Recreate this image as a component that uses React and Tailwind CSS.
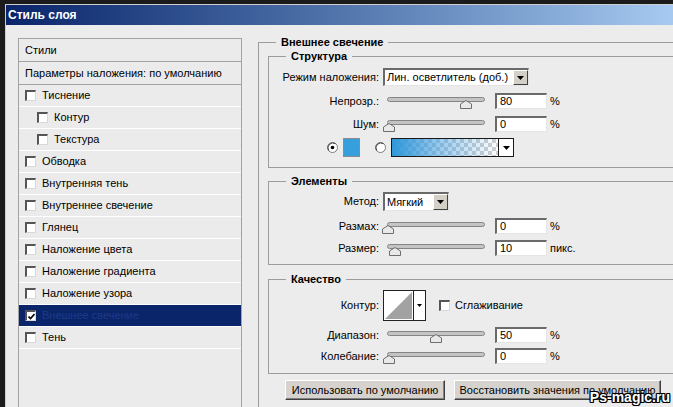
import React from 'react';

const layers = [
    { t: 'Тиснение' },
    { t: 'Контур', sub: true },
    { t: 'Текстура', sub: true },
    { t: 'Обводка' },
    { t: 'Внутренняя тень' },
    { t: 'Внутреннее свечение' },
    { t: 'Глянец' },
    { t: 'Наложение цвета' },
    { t: 'Наложение градиента' },
    { t: 'Наложение узора' },
    { t: 'Внешнее свечение', on: true, sel: true },
    { t: 'Тень' },
];

const Check = ({ on, className = '' }) => (
    <span className={`w-[11px] h-[11px] shrink-0 bg-white border-t-2 border-l-2 border-r border-b border-t-[#555] border-l-[#555] border-r-[#d8d8d8] border-b-[#d8d8d8] flex items-center justify-center ${className}`}>
        {on && (
            <svg width="7" height="7" viewBox="0 0 7 7">
                <path d="M0.5 3.5 L2.5 5.5 L6.5 1" stroke="#000" strokeWidth="1.6" fill="none" />
            </svg>
        )}
    </span>
);

const Radio = ({ on }) => (
    <svg width="11" height="11" viewBox="0 0 11 11" className="shrink-0">
        <circle cx="5.5" cy="5.5" r="5" fill="#fff" stroke="#7a7a7a" />
        <path d="M1.6 8.4 A5 5 0 0 1 8.4 1.6" stroke="#404040" fill="none" />
        {on && <circle cx="5.5" cy="5.5" r="1.8" fill="#000" />}
    </svg>
);

const Arrow = () => (
    <svg width="7" height="4" viewBox="0 0 7 4">
        <path d="M0 0 H7 L3.5 4 Z" fill="#000" />
    </svg>
);

const DropBtn = () => (
    <span className="w-[15px] h-full shrink-0 bg-[#d4d0c8] border border-t-white border-l-white border-r-[#404040] border-b-[#404040] flex items-center justify-center">
        <Arrow />
    </span>
);

const Select = ({ value, w }) => (
    <div className={`${w} h-full ml-[4px] bg-white border-t-2 border-l-2 border-r border-b border-t-[#6a6a6a] border-l-[#6a6a6a] border-r-[#e4e4e4] border-b-[#e4e4e4] flex items-center`}>
        <span className="flex-1 pl-[2px] truncate">{value}</span>
        <DropBtn />
    </div>
);

const Thumb = ({ left }) => (
    <svg width="12" height="9" viewBox="0 0 12 9" className="absolute top-[7px]" style={{ left }}>
        <path d="M0.5 4 L6 0.5 L11.5 4 V8.5 H0.5 Z" fill="#e9e9e9" stroke="#6e6e6e" />
    </svg>
);

const Slider = ({ pos }) => (
    <div className="relative w-[108px] h-full ml-[4px]">
        <div className="ml-[4px] mt-[4px] w-[98px] h-[5px] rounded-full bg-[#c4c4c4] border border-[#858585]" />
        <Thumb left={pos} />
    </div>
);

const NumInput = ({ value }) => (
    <div className="w-[52px] h-full ml-[4px] bg-white border-t-2 border-l-2 border-r border-b border-t-[#6a6a6a] border-l-[#6a6a6a] border-r-[#e4e4e4] border-b-[#e4e4e4] flex items-center pl-[3px]">
        {value}
    </div>
);

const Label = ({ children }) => (
    <span className="w-[110px] shrink-0 text-right">{children}</span>
);

const SliderRow = ({ label, pos, value, unit, className }) => (
    <div className={`flex items-center h-[16px] ${className}`}>
        <Label>{label}</Label>
        <Slider pos={pos} />
        <NumInput value={value} />
        <span className="ml-[3px]">{unit}</span>
    </div>
);

const Group = ({ title, className = '', children }) => (
    <fieldset className={`min-w-0 border border-[#9c9c9c] ${className}`}>
        <legend className="ml-[17px] px-[5px] font-bold leading-[14px]">{title}</legend>
        {children}
    </fieldset>
);

const WinButton = ({ children, w }) => (
    <button className={`${w} h-[20px] bg-[#d6d3ce] border border-t-white border-l-white border-r-[#404040] border-b-[#404040] shadow-[inset_-1px_-1px_0_#808080] text-center`}>
        {children}
    </button>
);

export default function App() {
    return (
        <div className="relative w-[673px] h-[407px] overflow-hidden bg-[#1b1b1b] pt-[4px] pl-[5px] font-['Liberation_Sans',Arial,sans-serif] text-[11px] text-black">
            <div className="h-full border-l border-t border-[#cfcfcf] flex flex-col">
                <div className="h-[20px] shrink-0 bg-linear-to-r from-[#0a246a] to-[#a6caf0] flex items-center pl-[2px] text-white font-bold text-[12px]">
                    Стиль слоя
                </div>

                <div className="flex-1 flex bg-[#ececec] overflow-hidden">
                    {/* styles list */}
                    <div className="pl-[12px] pt-[13px] shrink-0">
                        <div className="w-[224px] h-[420px] border border-[#a3a3a3] bg-[#ebebeb]">
                            <div className="h-[23px] border-b border-[#a3a3a3] flex items-center pl-[6px]">Стили</div>
                            <div className="h-[23px] border-b border-[#a3a3a3] flex items-center pl-[6px]">Параметры наложения: по умолчанию</div>
                            {layers.map((l) => (
                                <div
                                    key={l.t}
                                    className={`h-[22px] border-b border-white flex items-center ${l.sub ? 'pl-[18px]' : 'pl-[6px]'} ${l.sel ? 'bg-[#0a2569] text-[#1d3a8a]' : ''}`}
                                >
                                    <Check on={l.on} />
                                    <span className="ml-[6px]">{l.t}</span>
                                </div>
                            ))}
                        </div>
                    </div>

                    {/* settings */}
                    <div className="ml-[16px] pt-[10px] flex-1 min-w-0">
                        <Group title="Внешнее свечение" className="w-[440px] border-r-0 pb-[30px]">
                            <Group title="Структура" className="ml-[9px] w-[430px] pb-[10px]">
                                <div className="flex items-center h-[18px] mt-[5px]">
                                    <Label>Режим наложения:</Label>
                                    <Select value="Лин. осветлитель (доб.)" w="w-[146px]" />
                                </div>
                                <SliderRow label="Непрозр.:" pos={77} value="80" unit="%" className="mt-[7px]" />
                                <SliderRow label="Шум:" pos={0} value="0" unit="%" className="mt-[7px]" />
                                <div className="flex items-center h-[19px] mt-[6px] pl-[58px]">
                                    <Radio on />
                                    <span className="ml-[5px] w-[17px] h-[19px] bg-[#369fdc] border border-[#8a8a8a]" />
                                    <span className="ml-[15px]"><Radio /></span>
                                    <div className="ml-[5px] w-[123px] h-[19px] border border-[#1a1a1a] flex">
                                        <div className="flex-1 bg-[image:linear-gradient(to_right,#2f97d9,rgba(70,160,225,0.55)_45%,rgba(90,170,230,0)),repeating-conic-gradient(#cfcfcf_0_25%,#ffffff_0_50%)] [background-size:100%_100%,8px_8px]" />
                                        <span className="w-[15px] border-l border-[#1a1a1a] bg-white flex items-center justify-center">
                                            <Arrow />
                                        </span>
                                    </div>
                                </div>
                            </Group>

                            <Group title="Элементы" className="ml-[9px] mt-[6px] w-[430px] pb-[8px]">
                                <div className="flex items-center h-[19px] mt-[4px]">
                                    <Label>Метод:</Label>
                                    <Select value="Мягкий" w="w-[66px]" />
                                </div>
                                <SliderRow label="Размах:" pos={-1} value="0" unit="%" className="mt-[7px]" />
                                <SliderRow label="Размер:" pos={6} value="10" unit="пикс." className="mt-[6px]" />
                            </Group>

                            <Group title="Качество" className="ml-[9px] mt-[7px] w-[430px] pb-[9px]">
                                <div className="flex items-center h-[31px] mt-[4px]">
                                    <Label>Контур:</Label>
                                    <div className="ml-[4px] w-[43px] h-[31px] bg-white border border-[#222] flex">
                                        <svg width="29" height="29" viewBox="0 0 29 29" className="shrink-0">
                                            <path d="M1 28 L28 1 V28 Z" fill="#a2a2a2" />
                                        </svg>
                                        <span className="flex-1 border-l border-[#222] flex items-center justify-center">
                                            <svg width="5" height="3" viewBox="0 0 5 3">
                                                <path d="M0 0 H5 L2.5 3 Z" fill="#000" />
                                            </svg>
                                        </span>
                                    </div>
                                    <Check className="ml-[13px]" />
                                    <span className="ml-[5px]">Сглаживание</span>
                                </div>
                                <SliderRow label="Диапазон:" pos={47} value="50" unit="%" className="mt-[6px]" />
                                <SliderRow label="Колебание:" pos={0} value="0" unit="%" className="mt-[5px]" />
                            </Group>

                            <div className="flex mt-[6px] ml-[26px] gap-[9px]">
                                <WinButton w="w-[160px]">Использовать по умолчанию</WinButton>
                                <WinButton w="w-[207px]">Восстановить значения по умолчанию</WinButton>
                            </div>
                        </Group>
                    </div>
                </div>
            </div>

            <span className="absolute right-[3px] bottom-[2px] text-white font-bold text-[14px] leading-[16px] [text-shadow:1px_0_0_#000,-1px_0_0_#000,0_1px_0_#000,0_-1px_0_#000,1px_1px_0_#000,-1px_-1px_0_#000,1px_-1px_0_#000,-1px_1px_0_#000]">
                Ps-magic.ru
            </span>
        </div>
    );
}
